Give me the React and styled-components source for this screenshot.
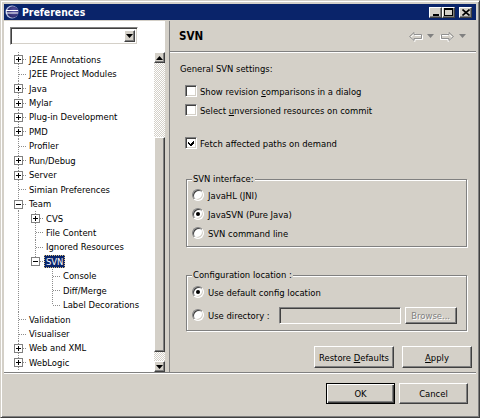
import React from 'react';
import styled, { createGlobalStyle, css } from 'styled-components';

const FONT = `"DejaVu Sans Condensed", "DejaVu Sans", sans-serif`;

const GlobalStyle = createGlobalStyle`
  html, body { margin: 0; padding: 0; background: #d4d0c8; }
  body { font-family: ${FONT}; font-size: 9.4px; color: #000; }
  * { box-sizing: border-box; }
  button { font-family: ${FONT}; font-size: 9.4px; }
`;

const raised = css`
  border: 1px solid;
  border-color: #fff #404040 #404040 #fff;
  box-shadow: inset -1px -1px #808080, inset 1px 1px #d4d0c8;
`;
const sunken = css`
  border: 1px solid;
  border-color: #808080 #fff #fff #808080;
  box-shadow: inset 1px 1px #404040, inset -1px -1px #d4d0c8;
`;

const Window = styled.div`
  width: 480px;
  height: 418px;
  border: 1px solid;
  border-color: #d4d0c8 #404040 #404040 #d4d0c8;
  box-shadow: inset 1px 1px #fff, inset -1px -1px #808080;
  padding: 3px;
  display: flex;
  flex-direction: column;
  background: #d4d0c8;
`;

const TitleBar = styled.div`
  height: 16px;
  flex: none;
  background: #0a246a;
  display: flex;
  align-items: center;
  padding: 0 4px 0 1px;
`;
const TitleText = styled.span`
  color: #fff;
  font-weight: bold;
  font-size: 10.4px;
  margin-left: 3px;
  flex: 1;
`;
const CaptionButton = styled.div`
  width: 13px;
  height: 11px;
  ${raised};
  background: #d4d0c8;
  display: flex;
  align-items: center;
  justify-content: center;
  margin-left: ${p => p.$gap || 0}px;
`;

const Body = styled.div`
  display: flex;
  height: 352px;
  flex: none;
  padding-top: 1px;
`;

const LeftPane = styled.div`
  width: 161px;
  flex: none;
  background: #fff;
  display: flex;
  flex-direction: column;
`;
const Combo = styled.div`
  margin: 6px 0 0 6px;
  width: 128px;
  height: 18px;
  flex: none;
  ${sunken};
  background: #fff;
  display: flex;
  justify-content: flex-end;
  padding: 2px;
`;
const ComboButton = styled.div`
  width: 11px;
  height: 100%;
  ${raised};
  background: #d4d0c8;
  display: flex;
  align-items: center;
  justify-content: center;
`;
const TreeArea = styled.div`
  margin-top: 7px;
  flex: 1;
  display: flex;
  min-height: 0;
`;
const Tree = styled.div`
  flex: 1;
  display: flex;
  flex-direction: column;
  padding-left: 6px;
  overflow: hidden;
`;
const Row = styled.div`
  height: 14.45px;
  flex: none;
  display: flex;
  align-items: stretch;
  white-space: nowrap;
`;
const dotsV = `repeating-linear-gradient(to bottom, #8c8c8c 0 1px, transparent 1px 2px)`;
const dotsH = `repeating-linear-gradient(to right, #8c8c8c 0 1px, transparent 1px 2px)`;
const Guide = styled.div`
  position: relative;
  width: 17px;
  flex: none;
  &::before {
    content: '';
    position: absolute;
    left: 8px;
    width: 1px;
    top: ${p => (p.$up ? '0' : '50%')};
    bottom: ${p => (p.$down ? '0' : '50%')};
    background: ${dotsV};
    display: ${p => (p.$up || p.$down ? 'block' : 'none')};
  }
  &::after {
    content: '';
    position: absolute;
    top: 50%;
    left: 9px;
    right: 0;
    height: 1px;
    background: ${dotsH};
    display: ${p => (p.$h ? 'block' : 'none')};
  }
`;
const Expander = styled.span`
  position: absolute;
  left: 4px;
  top: 50%;
  margin-top: -4px;
  width: 9px;
  height: 9px;
  border: 1px solid #808080;
  background: #fff;
  z-index: 1;
  &::before {
    content: '';
    position: absolute;
    left: 1px;
    top: 3px;
    width: 5px;
    height: 1px;
    background: #000;
  }
  &::after {
    content: '';
    position: absolute;
    left: 3px;
    top: 1px;
    width: 1px;
    height: 5px;
    background: #000;
    display: ${p => (p.$open ? 'none' : 'block')};
  }
`;
const NodeLabel = styled.span`
  align-self: center;
  line-height: 13px;
  padding: 0 2px;
  ${p =>
    p.$selected &&
    css`
      background: #0a246a;
      color: #fff;
      outline: 1px dotted #d8c080;
      outline-offset: -1px;
    `}
`;

const ScrollBar = styled.div`
  width: 11px;
  flex: none;
  display: flex;
  flex-direction: column;
`;
const ArrowBtn = styled.div`
  height: 11px;
  flex: none;
  ${raised};
  background: #d4d0c8;
  display: flex;
  align-items: center;
  justify-content: center;
`;
const Track = styled.div`
  flex: ${p => (p.$grow ? 1 : 'none')};
  height: ${p => p.$h || 0}px;
  background: repeating-conic-gradient(#fff 0 25%, #d4d0c8 0 50%) 0 0 / 2px 2px;
`;
const Thumb = styled.div`
  height: 215px;
  flex: none;
  ${raised};
  background: #d4d0c8;
`;

const Sash = styled.div`
  width: 5px;
  flex: none;
  border-right: 1px solid #808080;
`;

const RightPane = styled.div`
  flex: 1;
  display: flex;
  flex-direction: column;
`;
const Header = styled.div`
  height: 31px;
  flex: none;
  border-bottom: 1px solid #808080;
  box-shadow: 0 1px #fff;
  display: flex;
  align-items: center;
  padding: 0 4px 0 9px;
`;
const PageTitle = styled.span`
  font-weight: bold;
  font-size: 11.5px;
  flex: 1;
`;
const NavGroup = styled.div`
  display: flex;
  align-items: center;
  gap: 4px;
  margin-right: 6px;
`;

const Content = styled.div`
  display: flex;
  flex-direction: column;
  padding: 0 4px 0 10px;
`;
const Text = styled.div`
  line-height: 14px;
  height: 14px;
  margin-top: ${p => p.$mt || 0}px;
`;
const OptionRow = styled.div`
  display: flex;
  align-items: center;
  height: ${p => p.$h || 16}px;
  margin-top: ${p => p.$mt || 0}px;
  margin-left: ${p => p.$ml || 0}px;
  gap: 3px;
`;
const CheckBox = styled.span`
  width: 12px;
  height: 12px;
  flex: none;
  ${sunken};
  background: #fff;
  display: flex;
  align-items: center;
  justify-content: center;
`;
const Radio = styled.span`
  width: 12px;
  height: 12px;
  flex: none;
  border-radius: 50%;
  border: 1px solid;
  border-color: #808080 #fff #fff #808080;
  box-shadow: inset 1px 1px #404040, inset -1px -1px #d4d0c8;
  background: #fff;
  display: flex;
  align-items: center;
  justify-content: center;
  margin-right: 1px;
  &::after {
    content: '';
    width: 4px;
    height: 4px;
    border-radius: 50%;
    background: #000;
    display: ${p => (p.$on ? 'block' : 'none')};
  }
`;
const Group = styled.fieldset`
  margin: ${p => p.$mt || 0}px 5px 0 6px;
  padding: 0 5px ${p => p.$pb || 5}px 5px;
  border: 1px solid #808080;
  box-shadow: inset 1px 1px #fff, 1px 1px #fff;
  min-width: 0;
`;
const Legend = styled.legend`
  padding: 0 1px;
  line-height: 14px;
  background: #d4d0c8;
`;
const Field = styled.div`
  width: 122px;
  height: 17px;
  ${sunken};
  background: #d4d0c8;
  margin-left: 6px;
`;
const PushButton = styled.button`
  width: ${p => p.$w}px;
  height: ${p => p.$h || 22}px;
  padding: 0;
  margin: 0 0 0 ${p => p.$ml || 0}px;
  background: #d4d0c8;
  color: #000;
  ${raised};
  ${p =>
    p.$default &&
    css`
      border: 1px solid #000;
      box-shadow: inset 1px 1px #fff, inset -1px -1px #404040, inset -2px -2px #808080;
    `}
  ${p =>
    p.disabled &&
    css`
      color: #808080;
      text-shadow: 1px 1px #fff;
    `}
`;
const ButtonRow = styled.div`
  display: flex;
  justify-content: flex-end;
  margin-top: ${p => p.$mt || 0}px;
  padding-right: ${p => p.$pr || 0}px;
`;
const Footer = styled.div`
  flex: 1;
  border-top: 1px solid #808080;
  box-shadow: inset 0 1px #fff;
  display: flex;
  justify-content: flex-end;
  align-items: flex-start;
  padding: 10px 8px 0 0;
`;
const U = styled.span`
  text-decoration: underline;
  text-underline-offset: 1px;
`;

const TriDown = ({ c = '#000' }) => (
  <svg width="7" height="4" viewBox="0 0 7 4">
    <path d="M0 0h7L3.5 4z" fill={c} />
  </svg>
);
const TriUp = () => (
  <svg width="7" height="4" viewBox="0 0 7 4">
    <path d="M0 4h7L3.5 0z" fill="#000" />
  </svg>
);
const Check = () => (
  <svg width="8" height="8" viewBox="0 0 8 8" shapeRendering="crispEdges">
    <path d="M1 3h1v1h1v1h1V4h1V3h1V2h1v3H6v1H5v1H3V6H2V5H1z" fill="#000" />
  </svg>
);
const NavArrow = ({ dir }) => (
  <svg width="15" height="11" viewBox="0 0 15 11">
    <g transform={dir === 'right' ? 'translate(15,0) scale(-1,1)' : undefined}>
      <path d="M1.5 5.5L6 1.5V3.5H13.5V7.5H6V9.5Z" fill="none" stroke="#fff" strokeWidth="1" transform="translate(1,1)" />
      <path d="M1.5 5.5L6 1.5V3.5H13.5V7.5H6V9.5Z" fill="none" stroke="#909090" strokeWidth="1" />
    </g>
  </svg>
);
const EclipseIcon = () => (
  <svg width="14" height="14" viewBox="0 0 14 14">
    <defs>
      <radialGradient id="eg" cx="60%" cy="40%" r="70%">
        <stop offset="0" stopColor="#5a58a8" />
        <stop offset="1" stopColor="#231f5c" />
      </radialGradient>
    </defs>
    <circle cx="7" cy="7" r="6.5" fill="#b8c4e8" />
    <circle cx="7.8" cy="7" r="5.8" fill="url(#eg)" />
    <rect x="1" y="5" width="12" height="1" fill="#fff" />
    <rect x="1" y="7.5" width="12" height="1" fill="#fff" />
  </svg>
);

const tree = [
  { label: 'J2EE Annotations', depth: 0, exp: 'plus' },
  { label: 'J2EE Project Modules', depth: 0 },
  { label: 'Java', depth: 0, exp: 'plus' },
  { label: 'Mylar', depth: 0, exp: 'plus' },
  { label: 'Plug-in Development', depth: 0, exp: 'plus' },
  { label: 'PMD', depth: 0, exp: 'plus' },
  { label: 'Profiler', depth: 0 },
  { label: 'Run/Debug', depth: 0, exp: 'plus' },
  { label: 'Server', depth: 0, exp: 'plus' },
  { label: 'Simian Preferences', depth: 0 },
  { label: 'Team', depth: 0, exp: 'minus' },
  { label: 'CVS', depth: 1, exp: 'plus', rails: [true] },
  { label: 'File Content', depth: 1, rails: [true] },
  { label: 'Ignored Resources', depth: 1, rails: [true] },
  { label: 'SVN', depth: 1, exp: 'minus', last: true, selected: true, rails: [true] },
  { label: 'Console', depth: 2, rails: [true, false] },
  { label: 'Diff/Merge', depth: 2, rails: [true, false] },
  { label: 'Label Decorations', depth: 2, last: true, rails: [true, false] },
  { label: 'Validation', depth: 0 },
  { label: 'Visualiser', depth: 0 },
  { label: 'Web and XML', depth: 0, exp: 'plus' },
  { label: 'WebLogic', depth: 0, exp: 'plus' },
];

const TreeRow = ({ item }) => (
  <Row>
    {(item.rails || []).map((r, i) => (
      <Guide key={i} $up={r} $down={r} />
    ))}
    <Guide $up $down={!item.last} $h>
      {item.exp && <Expander $open={item.exp === 'minus'} />}
    </Guide>
    <NodeLabel $selected={item.selected}>{item.label}</NodeLabel>
  </Row>
);

export default function App() {
  return (
    <>
      <GlobalStyle />
      <Window>
        <TitleBar>
          <EclipseIcon />
          <TitleText>Preferences</TitleText>
          <CaptionButton>
            <svg width="6" height="7" viewBox="0 0 6 7">
              <rect x="0" y="5" width="6" height="2" fill="#000" />
            </svg>
          </CaptionButton>
          <CaptionButton>
            <svg width="9" height="8" viewBox="0 0 9 8">
              <path d="M0 0h9v8H0z M1 2v5h7V2z" fill="#000" fillRule="evenodd" />
            </svg>
          </CaptionButton>
          <CaptionButton $gap={4}>
            <svg width="8" height="7" viewBox="0 0 8 7">
              <path d="M0.5 0.5L7.5 6.5M7.5 0.5L0.5 6.5" stroke="#000" strokeWidth="1.6" />
            </svg>
          </CaptionButton>
        </TitleBar>
        <Body>
          <LeftPane>
            <Combo>
              <ComboButton>
                <TriDown />
              </ComboButton>
            </Combo>
            <TreeArea>
              <Tree>
                {tree.map(item => (
                  <TreeRow key={item.label} item={item} />
                ))}
              </Tree>
              <ScrollBar>
                <ArrowBtn>
                  <TriUp />
                </ArrowBtn>
                <Track $h={74} />
                <Thumb />
                <Track $grow />
                <ArrowBtn>
                  <TriDown />
                </ArrowBtn>
              </ScrollBar>
            </TreeArea>
          </LeftPane>
          <Sash />
          <RightPane>
            <Header>
              <PageTitle>SVN</PageTitle>
              <NavGroup>
                <NavArrow dir="left" />
                <TriDown c="#808080" />
              </NavGroup>
              <NavGroup>
                <NavArrow dir="right" />
                <TriDown c="#808080" />
              </NavGroup>
            </Header>
            <Content>
              <Text $mt={10}>General SVN settings:</Text>
              <OptionRow $mt={7} $ml={5}>
                <CheckBox />
                <span>
                  Show revision <U>c</U>omparisons in a dialog
                </span>
              </OptionRow>
              <OptionRow $mt={3} $ml={5}>
                <CheckBox />
                <span>
                  Select <U>u</U>nversioned resources on commit
                </span>
              </OptionRow>
              <OptionRow $mt={17} $ml={5}>
                <CheckBox>
                  <Check />
                </CheckBox>
                <span>Fetch affected paths on demand</span>
              </OptionRow>
              <Group $mt={21}>
                <Legend>SVN interface:</Legend>
                <OptionRow $mt={1}>
                  <Radio />
                  <span>JavaHL (JNI)</span>
                </OptionRow>
                <OptionRow $mt={3}>
                  <Radio $on />
                  <span>JavaSVN (Pure Java)</span>
                </OptionRow>
                <OptionRow $mt={3}>
                  <Radio />
                  <span>SVN command line</span>
                </OptionRow>
              </Group>
              <Group $mt={21} $pb={6}>
                <Legend>Configuration location :</Legend>
                <OptionRow $mt={2}>
                  <Radio $on />
                  <span>Use default config location</span>
                </OptionRow>
                <OptionRow $mt={6} $h={18}>
                  <Radio />
                  <span>Use directory :</span>
                  <Field />
                  <PushButton $w={52} $h={17} $ml={1} disabled>
                    Browse...
                  </PushButton>
                </OptionRow>
              </Group>
              <ButtonRow $mt={15}>
                <PushButton $w={80}>
                  Restore <U>D</U>efaults
                </PushButton>
                <PushButton $w={70} $ml={8}>
                  <U>A</U>pply
                </PushButton>
              </ButtonRow>
            </Content>
          </RightPane>
        </Body>
        <Footer>
          <PushButton $w={69} $h={21} $default>
            OK
          </PushButton>
          <PushButton $w={69} $h={21} $ml={4}>
            Cancel
          </PushButton>
        </Footer>
      </Window>
    </>
  );
}
